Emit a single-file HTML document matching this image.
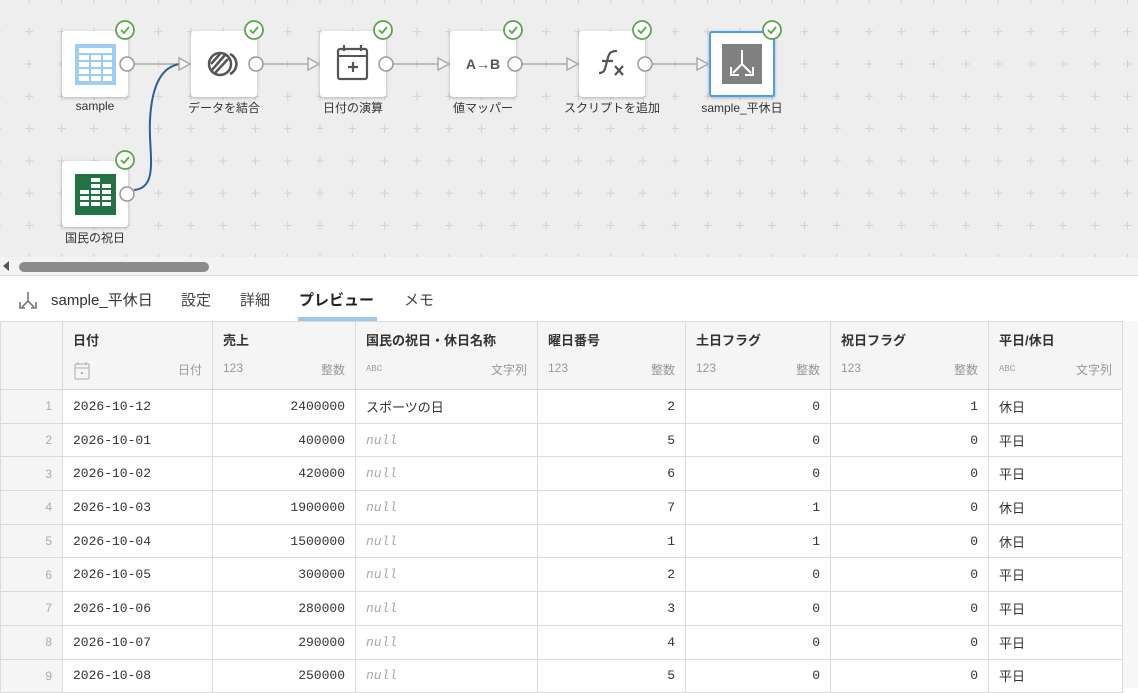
<!DOCTYPE html>
<html><head><meta charset="utf-8">
<style>
*{box-sizing:border-box;margin:0;padding:0}
body{width:1138px;height:688px;overflow:hidden;background:#fff;font-family:"Liberation Sans","Noto Sans CJK JP",sans-serif;color:#333;position:relative}
#canvas{position:absolute;left:0;top:0;width:1138px;height:257px;background:#eeeeee;overflow:hidden}
.node{position:absolute;width:66px;height:66px;background:#fff;border-radius:3px;box-shadow:0 1px 3px rgba(0,0,0,.25)}
.node.sel{border:2px solid #4a9eea}
.lbl{position:absolute;font-size:12px;color:#333;text-align:center;width:140px;white-space:nowrap}
#sb{position:absolute;top:257px;left:0;width:1138px;height:19px;background:#f3f3f3;border-bottom:1px solid #ddd}
#tabs{position:absolute;top:276px;left:0;width:1138px;height:46px;background:#fff;border-bottom:1px solid #d8d8d8}
.tab{position:absolute;top:13px;font-size:15px;color:#444}
table{position:absolute;top:321px;left:0;border-collapse:collapse;table-layout:fixed;width:1122px}
td,th{border:1px solid #dadada;height:33.7px;font-size:13px;padding:0 10px;white-space:nowrap;overflow:hidden}
th{background:#f5f5f5;text-align:left;font-weight:bold;font-size:13px;vertical-align:top;padding-top:8px;height:68px;color:#333}
th .t{display:flex;justify-content:space-between;margin-top:12px;font-weight:normal;font-size:12px;color:#999}
td{font-family:"Liberation Mono","Noto Sans CJK JP",monospace;color:#333}
td.r{text-align:right}
td.n{background:#f5f5f5;text-align:right;color:#aaa;font-size:12px;font-family:"Liberation Sans",sans-serif}
td.j{font-family:"Liberation Sans","Noto Sans CJK JP",sans-serif}
td.null{color:#aaa;font-style:italic}
.abc{font-size:8px;color:#999;margin-top:3px}
</style></head><body>
<div id="canvas">
<svg width="1138" height="257" style="position:absolute;left:0;top:0">
<defs><pattern id="p" x="29.3" y="31.7" width="32.3" height="32.3" patternUnits="userSpaceOnUse">
<path d="M0 -4V4M-4 0H4M32.3 -4V4M28.3 0H36.3M0 28.3V36.3M-4 32.3H4M32.3 28.3V36.3M28.3 32.3H36.3" stroke="#d2d2d2" stroke-width="1.1"/>
</pattern></defs>
<rect width="1138" height="257" fill="url(#p)"/>
<g stroke="#aaa" stroke-width="1.5" fill="none">
<line x1="134" y1="64" x2="180" y2="64"/><line x1="263" y1="64" x2="309" y2="64"/><line x1="392" y1="64" x2="438" y2="64"/><line x1="522" y1="64" x2="567" y2="64"/><line x1="651" y1="64" x2="697" y2="64"/>
</g>
<path d="M134 190C160 188 148 150 150 120C152 80 165 66 180 64" stroke="#2c5f96" stroke-width="2" fill="none"/>
</svg>

<div class="node" style="left:62px;top:31px"><svg width="66" height="66"><rect x="13" y="13" width="41" height="41" fill="#9dcdf2"/><g fill="#fff"><rect x="17" y="17" width="33" height="5"/><rect x="17" y="24" width="10" height="5"/><rect x="29" y="24" width="10" height="5"/><rect x="41" y="24" width="9" height="5"/><rect x="17" y="31" width="10" height="5"/><rect x="29" y="31" width="10" height="5"/><rect x="41" y="31" width="9" height="5"/><rect x="17" y="38" width="10" height="5"/><rect x="29" y="38" width="10" height="5"/><rect x="41" y="38" width="9" height="5"/><rect x="17" y="45" width="10" height="5"/><rect x="29" y="45" width="10" height="5"/><rect x="41" y="45" width="9" height="5"/></g></svg></div>
<div class="node" style="left:191px;top:31px"><svg width="66" height="66"><circle cx="29" cy="33" r="11" fill="none" stroke="#555" stroke-width="2.5"/><path d="M21 39L34 24M24 42L37 28M20 33L29 23" stroke="#555" stroke-width="2.5"/><path d="M39 23A11 11 0 0 1 39 43" fill="none" stroke="#555" stroke-width="2.5"/></svg></div>
<div class="node" style="left:320px;top:31px"><svg width="66" height="66"><rect x="18" y="18" width="29" height="30" rx="2" fill="none" stroke="#555" stroke-width="2.2"/><line x1="18" y1="25" x2="47" y2="25" stroke="#555" stroke-width="2"/><path d="M24 14V20M41 14V20M33 31V41M28 36H38" stroke="#555" stroke-width="2.2"/></svg></div>
<div class="node" style="left:450px;top:31px"><svg width="66" height="66"><text x="33" y="38" text-anchor="middle" font-size="14" font-weight="bold" fill="#555" font-family="Liberation Sans">A→B</text></svg></div>
<div class="node" style="left:579px;top:31px"><svg width="66" height="66"><path d="M20 42C26 42 26 38 28 30C30 22 31 20 38 20M23 30H34" fill="none" stroke="#555" stroke-width="2.2"/><path d="M36 35L44 44M44 35L36 44" stroke="#555" stroke-width="2.2"/></svg></div>
<div class="node sel" style="left:709px;top:31px"><svg width="62" height="62"><rect x="11" y="11" width="40" height="40" fill="#808080"/><path d="M31 17V31M31 31L22 40M31 31L40 40M20 34V42H28M42 34V42H34" fill="none" stroke="#fff" stroke-width="2"/></svg></div>
<div class="node" style="left:62px;top:161px"><svg width="66" height="66"><rect x="13" y="13" width="41" height="41" fill="#217346"/><g fill="#fff"><rect x="29" y="17" width="9" height="4"/><rect x="29" y="23" width="9" height="4"/><rect x="40" y="23" width="9" height="4"/><rect x="18" y="29" width="9" height="4"/><rect x="29" y="29" width="9" height="4"/><rect x="40" y="29" width="9" height="4"/><rect x="18" y="35" width="9" height="4"/><rect x="29" y="35" width="9" height="4"/><rect x="40" y="35" width="9" height="4"/><rect x="18" y="41" width="9" height="4"/><rect x="29" y="41" width="9" height="4"/><rect x="40" y="41" width="9" height="4"/></g></svg></div>

<svg width="1138" height="257" style="position:absolute;left:0;top:0">
<g fill="#fff" stroke="#999" stroke-width="1.5">
<circle cx="127" cy="64" r="7"/><circle cx="256" cy="64" r="7"/><circle cx="386" cy="64" r="7"/><circle cx="515" cy="64" r="7"/><circle cx="645" cy="64" r="7"/><circle cx="127" cy="194" r="7"/>
</g>
<g fill="#f4f4f4" stroke="#aaa" stroke-width="1.5">
<path d="M179 58L190 64L179 70Z"/><path d="M308 58L319 64L308 70Z"/><path d="M438 58L449 64L438 70Z"/><path d="M567 58L578 64L567 70Z"/><path d="M697 58L708 64L697 70Z"/>
</g>
<g>
<g transform="translate(125,30)"><circle r="9" fill="#fff" stroke="#5aa64a" stroke-width="1.8"/><path d="M-4 0L-1 3L4 -3" fill="none" stroke="#5aa64a" stroke-width="1.8"/></g>
<g transform="translate(254,30)"><circle r="9" fill="#fff" stroke="#5aa64a" stroke-width="1.8"/><path d="M-4 0L-1 3L4 -3" fill="none" stroke="#5aa64a" stroke-width="1.8"/></g>
<g transform="translate(383,30)"><circle r="9" fill="#fff" stroke="#5aa64a" stroke-width="1.8"/><path d="M-4 0L-1 3L4 -3" fill="none" stroke="#5aa64a" stroke-width="1.8"/></g>
<g transform="translate(513,30)"><circle r="9" fill="#fff" stroke="#5aa64a" stroke-width="1.8"/><path d="M-4 0L-1 3L4 -3" fill="none" stroke="#5aa64a" stroke-width="1.8"/></g>
<g transform="translate(642,30)"><circle r="9" fill="#fff" stroke="#5aa64a" stroke-width="1.8"/><path d="M-4 0L-1 3L4 -3" fill="none" stroke="#5aa64a" stroke-width="1.8"/></g>
<g transform="translate(772,30)"><circle r="9" fill="#fff" stroke="#5aa64a" stroke-width="1.8"/><path d="M-4 0L-1 3L4 -3" fill="none" stroke="#5aa64a" stroke-width="1.8"/></g>
<g transform="translate(125,160)"><circle r="9" fill="#fff" stroke="#5aa64a" stroke-width="1.8"/><path d="M-4 0L-1 3L4 -3" fill="none" stroke="#5aa64a" stroke-width="1.8"/></g>
</g>
</svg>
<div class="lbl" style="left:25px;top:99px">sample</div>
<div class="lbl" style="left:154px;top:99px">データを結合</div>
<div class="lbl" style="left:283px;top:99px">日付の演算</div>
<div class="lbl" style="left:413px;top:99px">値マッパー</div>
<div class="lbl" style="left:542px;top:99px">スクリプトを追加</div>
<div class="lbl" style="left:672px;top:99px">sample_平休日</div>
<div class="lbl" style="left:25px;top:229px">国民の祝日</div>
</div>
<div id="sb"><svg width="220" height="19"><path d="M3 9L9 4V14Z" fill="#555"/><rect x="19" y="5" width="190" height="10" rx="5" fill="#8c8c8c"/></svg></div>
<div id="tabs">
<svg style="position:absolute;left:17px;top:14px" width="22" height="20"><path d="M11 2V11M11 11L5 17M11 11L17 17M3 12V18H8M19 12V18H14" fill="none" stroke="#777" stroke-width="1.6"/></svg>
<div class="tab" style="left:51px;color:#333">sample_平休日</div>
<div class="tab" style="left:181px">設定</div>
<div class="tab" style="left:240px">詳細</div>
<div class="tab" style="left:299px;font-weight:bold;color:#222">プレビュー</div>
<div style="position:absolute;left:298px;top:41px;width:79px;height:4px;background:#9fc9ea"></div>
<div class="tab" style="left:404px">メモ</div>
</div>
<div style="position:absolute;left:1122px;top:321px;width:16px;height:367px;background:#f7f7f7;border-left:1px solid #ddd"></div>
<table>
<colgroup><col style="width:62px"><col style="width:150px"><col style="width:143px"><col style="width:182px"><col style="width:148px"><col style="width:145px"><col style="width:158px"><col style="width:134px"></colgroup>
<tr><th style="height:67.5px"></th>
<th>日付<div class="t"><svg width="18" height="20"><rect x="2" y="3" width="14" height="15" rx="1" fill="none" stroke="#aaa"/><path d="M2 7H16M5 1V4M13 1V4" stroke="#aaa"/><rect x="8" y="11" width="2" height="2" fill="#aaa"/></svg><span>日付</span></div></th>
<th>売上<div class="t"><span>123</span><span>整数</span></div></th>
<th>国民の祝日・休日名称<div class="t"><span class="abc">ABC</span><span>文字列</span></div></th>
<th>曜日番号<div class="t"><span>123</span><span>整数</span></div></th>
<th>土日フラグ<div class="t"><span>123</span><span>整数</span></div></th>
<th>祝日フラグ<div class="t"><span>123</span><span>整数</span></div></th>
<th>平日/休日<div class="t"><span class="abc">ABC</span><span>文字列</span></div></th></tr>
<tr><td class="n">1</td><td>2026-10-12</td><td class="r">2400000</td><td class="j">スポーツの日</td><td class="r">2</td><td class="r">0</td><td class="r">1</td><td class="j">休日</td></tr>
<tr><td class="n">2</td><td>2026-10-01</td><td class="r">400000</td><td class="null">null</td><td class="r">5</td><td class="r">0</td><td class="r">0</td><td class="j">平日</td></tr>
<tr><td class="n">3</td><td>2026-10-02</td><td class="r">420000</td><td class="null">null</td><td class="r">6</td><td class="r">0</td><td class="r">0</td><td class="j">平日</td></tr>
<tr><td class="n">4</td><td>2026-10-03</td><td class="r">1900000</td><td class="null">null</td><td class="r">7</td><td class="r">1</td><td class="r">0</td><td class="j">休日</td></tr>
<tr><td class="n">5</td><td>2026-10-04</td><td class="r">1500000</td><td class="null">null</td><td class="r">1</td><td class="r">1</td><td class="r">0</td><td class="j">休日</td></tr>
<tr><td class="n">6</td><td>2026-10-05</td><td class="r">300000</td><td class="null">null</td><td class="r">2</td><td class="r">0</td><td class="r">0</td><td class="j">平日</td></tr>
<tr><td class="n">7</td><td>2026-10-06</td><td class="r">280000</td><td class="null">null</td><td class="r">3</td><td class="r">0</td><td class="r">0</td><td class="j">平日</td></tr>
<tr><td class="n">8</td><td>2026-10-07</td><td class="r">290000</td><td class="null">null</td><td class="r">4</td><td class="r">0</td><td class="r">0</td><td class="j">平日</td></tr>
<tr><td class="n">9</td><td>2026-10-08</td><td class="r">250000</td><td class="null">null</td><td class="r">5</td><td class="r">0</td><td class="r">0</td><td class="j">平日</td></tr>
</table>
</body></html>
